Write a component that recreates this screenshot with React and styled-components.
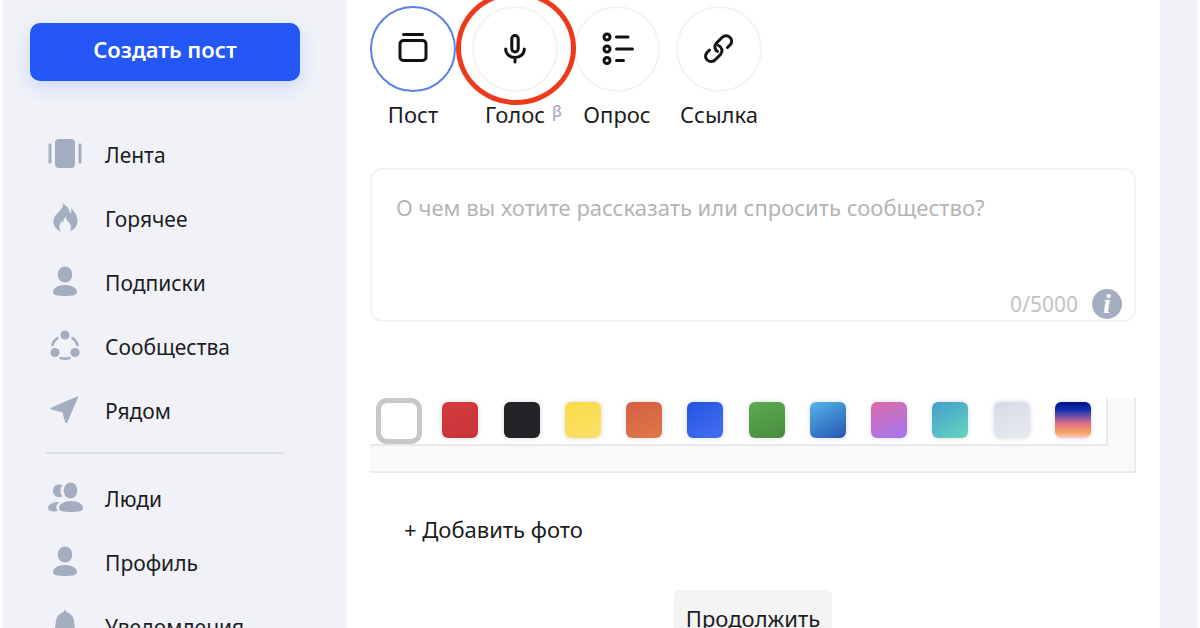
import React, { useState } from 'react';
import styled, { createGlobalStyle, css } from 'styled-components';

const GlobalStyle = createGlobalStyle`
  * {
    box-sizing: border-box;
  }

  body {
    margin: 0;
    background: #fff;
  }

  body, button, input, textarea {
    font-family: 'Noto Sans', 'Open Sans', sans-serif;
  }
`;

const Page = styled.div`
  display: grid;
  grid-template-columns: 344px 1fr;
  height: 100vh;
  overflow: hidden;
  margin: 0 3px;
  padding-right: 37px;
  background: #f0f2f8;
  color: #1c1c1e;
`;

const Sidebar = styled.aside`
  padding: 23px 47px 0 27px;
`;

const CreateButton = styled.button`
  display: block;
  width: 100%;
  height: 58px;
  padding: 0 0 6px;
  border: 0;
  border-radius: 10px;
  background: #2457f5;
  box-shadow: 0 6px 18px rgba(36, 70, 245, 0.16);
  color: #fff;
  font-size: 22px;
  font-weight: 600;
`;

const Menu = styled.nav`
  margin-top: 42px;
  padding-left: 16px;
`;

const MenuLink = styled.a`
  display: flex;
  align-items: center;
  gap: 22px;
  height: 64px;
  padding-left: 1px;
  color: inherit;
  font-size: 21px;
  text-decoration: none;

  svg {
    flex: none;
    margin-bottom: 2px;
    fill: #a5aec0;
  }
`;

const Divider = styled.hr`
  height: 2px;
  margin: 9px 16px 13px 0;
  border: 0;
  background: #dddfe6;
`;

const Main = styled.main`
  padding: 6px 24px 0 23px;
  background: #fff;
`;

const Tabs = styled.div`
  display: flex;
  gap: 16px;
`;

const Tab = styled.button`
  position: relative;
  display: flex;
  flex-direction: column;
  align-items: center;
  gap: 7px;
  width: 86px;
  padding: 0;
  border: 0;
  background: none;
  color: inherit;
  font-size: 22px;
  line-height: 30px;
  white-space: nowrap;
`;

const Circle = styled.span`
  display: flex;
  align-items: center;
  justify-content: center;
  width: 86px;
  height: 86px;
  border: 2px solid ${props => props.$active ? '#5b80e6' : '#f4f4f4'};
  border-radius: 50%;

  svg {
    fill: none;
    stroke: #111;
    stroke-width: 3;
    stroke-linecap: round;
    stroke-linejoin: round;
  }
`;

const Beta = styled.sup`
  position: absolute;
  top: 90px;
  right: -4px;
  color: #a5aec0;
  font-size: 16px;
  font-weight: 500;
  line-height: 30px;
`;

const Marker = styled.span`
  position: absolute;
  z-index: 1;
  top: -15px;
  left: -16px;
  width: 120px;
  height: 114px;
  border: 5px solid #ee3a1c;
  border-radius: 50%;
`;

const Editor = styled.div`
  display: flex;
  flex-direction: column;
  height: 154px;
  margin-top: 39px;
  border: 2px solid #f3f3f3;
  border-radius: 12px;
`;

const Message = styled.textarea`
  flex: 1;
  width: 100%;
  padding: 21px 24px 0;
  border: 0;
  outline: 0;
  background: none;
  color: inherit;
  font-size: 22px;
  line-height: 32px;
  resize: none;

  &::placeholder {
    color: #b4b4b4;
    opacity: 1;
  }
`;

const EditorFooter = styled.div`
  display: flex;
  align-items: center;
  justify-content: flex-end;
  gap: 14px;
  padding: 0 12px 1px;
  color: #c2c2c2;
  font-size: 21px;
  line-height: 30px;
`;

const InfoButton = styled.button`
  width: 30px;
  height: 30px;
  padding: 0;
  border: 0;
  border-radius: 50%;
  background: #a5aec0;
  color: #fff;
  font: italic bold 28px/28px 'Liberation Serif', serif;
`;

const Palette = styled.div`
  margin-top: 76px;
  padding: 0 26px 25px 0;
  border: solid #ececec;
  border-width: 0 2px 2px 0;
  background: #fafafa;
`;

const Swatches = styled.div`
  display: flex;
  justify-content: space-between;
  padding: 0 10px 0 6px;
  border: solid #e9e9e9;
  border-width: 0 2px 2px 0;
  background: #fff;
`;

const Swatch = styled.input`
  appearance: none;
  width: 36px;
  height: 36px;
  margin: 4px 5px 6px;
  border-radius: 6px;
  background: ${props => props.$fill};
  box-shadow: 0 0 5px rgba(0, 0, 0, 0.16);

  ${props => props.checked && css`
    width: 46px;
    height: 46px;
    margin: 0;
    border: 5px solid #c8c8c8;
    border-radius: 11px;
    box-shadow: none;
  `}
`;

const AddPhoto = styled.button`
  display: block;
  margin: 40px 0 0 34px;
  padding: 0;
  border: 0;
  background: none;
  color: inherit;
  font-size: 22px;
  line-height: 32px;
`;

const Submit = styled.button`
  display: block;
  height: 57px;
  margin: 45px auto 0;
  padding: 0 12px 2px;
  border: 0;
  border-radius: 6px;
  background: #f4f4f4;
  color: inherit;
  font-size: 22px;
`;

const MenuIcon = ({children}) => (
  <svg width="36" height="36" viewBox="0 0 36 36" aria-hidden="true">{children}</svg>
);

const FeedIcon = () => (
  <MenuIcon>
    <rect x="8" y="3" width="20" height="29" rx="4" />
    <rect x="1.500" y="7.500" width="3" height="20" rx="1" />
    <rect x="31.500" y="7.500" width="3" height="20" rx="1" />
  </MenuIcon>
);

const FireIcon = () => (
  <MenuIcon>
    <path d="M15 3c7 4 8 8 8 11 1-1 2-3 1-6 5 5 6.500 9 6.500 13 0 5-3 8-7.500 10.500 2.500-6-.5-8.500-2.500-10.500-1-1-1.500-3-1.500-4.500-2 2-3 4-3 6l-1.500-1.500c-2 4-3.500 6-.5 10.500-5-2-7.500-5.500-7.500-10.500 0-8 10.500-10 9.500-18z" />
  </MenuIcon>
);

const PersonIcon = () => (
  <MenuIcon>
    <ellipse cx="18" cy="10.500" rx="7.300" ry="8" />
    <path d="M6 28c0-4 5-7 12-7s12 3 12 7c0 3-4 4-12 4S6 31 6 28z" />
  </MenuIcon>
);

const CommunityIcon = () => (
  <MenuIcon>
    <circle cx="18" cy="7" r="4.600" />
    <circle cx="8" cy="24.500" r="4.600" />
    <circle cx="28" cy="24.500" r="4.600" />
    <path
      d="M10.500 10q-4 3-5 7M25.500 10q4 3 5 7M13.500 30q4.500 1.300 9 0"
      fill="none"
      stroke="#a5aec0"
      strokeWidth="2.600"
      strokeLinecap="round"
    />
  </MenuIcon>
);

const NearbyIcon = () => (
  <MenuIcon>
    <path d="M30 4.500q1.500-.5 1 1L20.500 30q-1.500 2.500-2.500 0L15.500 20.500 4.500 17.500q-2-1 0-2z" />
  </MenuIcon>
);

const PeopleIcon = () => (
  <MenuIcon>
    <path d="M15.500 5.200A8.500 8.500 0 0 0 15.500 16.500C10 19 6 15 6 11 6 6 10 3 15.500 5.200z" />
    <path d="M13 22c-4 2-5 6-2 9-6 1-10 0-10-3 0-4 6-6.500 12-6z" />
    <ellipse cx="23.500" cy="10.500" rx="6.800" ry="8" />
    <path d="M12 28c0-4 5-7 12-7s12 3 12 7c0 3-4 4-12 4s-12-1-12-4z" />
  </MenuIcon>
);

const BellIcon = () => (
  <MenuIcon>
    <path d="M16.500 4c0-2.500 3-2.500 3 0 4.500 1.500 7 5 7.500 9l1.500 10 2.500 4v2H5v-2l2.500-4L9 13c.5-4 3-7.500 7.500-9zM14 30h8q-4 5-8 0z" />
  </MenuIcon>
);

const PostIcon = () => (
  <svg width="34" height="34" viewBox="0 0 34 34">
    <path d="M7.500 2.500h19" />
    <rect x="4" y="8.500" width="26" height="20" rx="3.500" />
  </svg>
);

const VoiceIcon = () => (
  <svg width="34" height="34" viewBox="0 0 34 34">
    <rect x="13.800" y="3.500" width="6.400" height="16.500" rx="3.200" />
    <path d="M7.700 17c0 5 4 8.500 9.300 8.500s9.300-3.500 9.300-8.500M17 26v4" />
  </svg>
);

const PollIcon = () => (
  <svg width="34" height="34" viewBox="0 0 34 34">
    <circle cx="7" cy="5" r="3" />
    <circle cx="7" cy="17" r="3" />
    <circle cx="7" cy="28.500" r="3" />
    <path d="M16.500 5h11.500M16.500 17h16M16.500 28.500h7" />
  </svg>
);

const LinkIcon = () => (
  <svg width="34" height="34" viewBox="0 0 34 34">
    <path d="M15.500 19.500c-3-2-3.500-5.500-1-8.500l5.500-5.500c5.500-5 13 2 8 7.500l-2.500 2.500" />
    <path d="M16.500 13.500c4 2 4.500 6 2 9l-5.500 5.500c-5.500 4.500-12.500-2-8-7.500l2.500-2.500" />
  </svg>
);

const mainMenu = [
  {title: 'Лента', Icon: FeedIcon},
  {title: 'Горячее', Icon: FireIcon},
  {title: 'Подписки', Icon: PersonIcon},
  {title: 'Сообщества', Icon: CommunityIcon},
  {title: 'Рядом', Icon: NearbyIcon},
];

const userMenu = [
  {title: 'Люди', Icon: PeopleIcon},
  {title: 'Профиль', Icon: PersonIcon},
  {title: 'Уведомления', Icon: BellIcon},
];

const postTypes = [
  {title: 'Пост', Icon: PostIcon, active: true},
  {title: 'Голос', Icon: VoiceIcon, beta: true, marked: true},
  {title: 'Опрос', Icon: PollIcon},
  {title: 'Ссылка', Icon: LinkIcon},
];

const fills = [
  {name: 'Белый', value: '#fff'},
  {name: 'Красный', value: 'linear-gradient(160deg, #d63a3c, #c5353a)'},
  {name: 'Чёрный', value: '#222427'},
  {name: 'Жёлтый', value: 'linear-gradient(160deg, #fada48, #fbe169)'},
  {name: 'Оранжевый', value: 'linear-gradient(160deg, #d35f43, #df7848)'},
  {name: 'Синий', value: 'linear-gradient(150deg, #2453e0, #4470f2)'},
  {name: 'Зелёный', value: 'linear-gradient(160deg, #5bab50, #488b3f)'},
  {name: 'Голубой', value: 'linear-gradient(150deg, #52b6e8, #2853b4)'},
  {name: 'Розовый', value: 'linear-gradient(160deg, #dc6bac, #a277ee)'},
  {name: 'Бирюзовый', value: 'linear-gradient(150deg, #439fcd, #65d5bd)'},
  {name: 'Серый', value: 'linear-gradient(160deg, #d5dce7, #e7eaf0)'},
  {name: 'Закат', value: 'linear-gradient(#000f86, #1230b0 22%, #e0708c 60%, #f7a55c 85%, #f8cbd8)'},
];

const MenuItem = ({title, Icon}) => (
  <MenuLink href="#">
    <Icon />
    {title}
  </MenuLink>
);

const PostType = ({title, Icon, active, beta, marked}) => (
  <Tab type="button" aria-pressed={!!active}>
    <Circle $active={active}><Icon /></Circle>
    {title}
    {beta && <Beta>β</Beta>}
    {marked && <Marker />}
  </Tab>
);

const App = () => {
  const [text, setText] = useState('');
  const [fill, setFill] = useState('Белый');

  return (
    <>
      <GlobalStyle />
      <Page>
        <Sidebar>
          <CreateButton type="button">Создать пост</CreateButton>
          <Menu>
            {mainMenu.map(item => <MenuItem key={item.title} {...item} />)}
            <Divider />
            {userMenu.map(item => <MenuItem key={item.title} {...item} />)}
          </Menu>
        </Sidebar>
        <Main>
          <Tabs>
            {postTypes.map(type => <PostType key={type.title} {...type} />)}
          </Tabs>
          <Editor>
            <Message
              aria-label="Текст поста"
              placeholder="О чем вы хотите рассказать или спросить сообщество?"
              maxLength={5000}
              value={text}
              onChange={e => setText(e.target.value)}
            />
            <EditorFooter>
              <span>{text.length}/5000</span>
              <InfoButton type="button">i</InfoButton>
            </EditorFooter>
          </Editor>
          <Palette>
            <Swatches role="radiogroup" aria-label="Фон поста">
              {fills.map(({name, value}) => (
                <Swatch
                  key={name}
                  type="radio"
                  name="fill"
                  aria-label={name}
                  checked={fill === name}
                  onChange={() => setFill(name)}
                  $fill={value}
                />
              ))}
            </Swatches>
          </Palette>
          <AddPhoto type="button">+ Добавить фото</AddPhoto>
          <Submit type="button">Продолжить</Submit>
        </Main>
      </Page>
    </>
  );
};

export default App;
